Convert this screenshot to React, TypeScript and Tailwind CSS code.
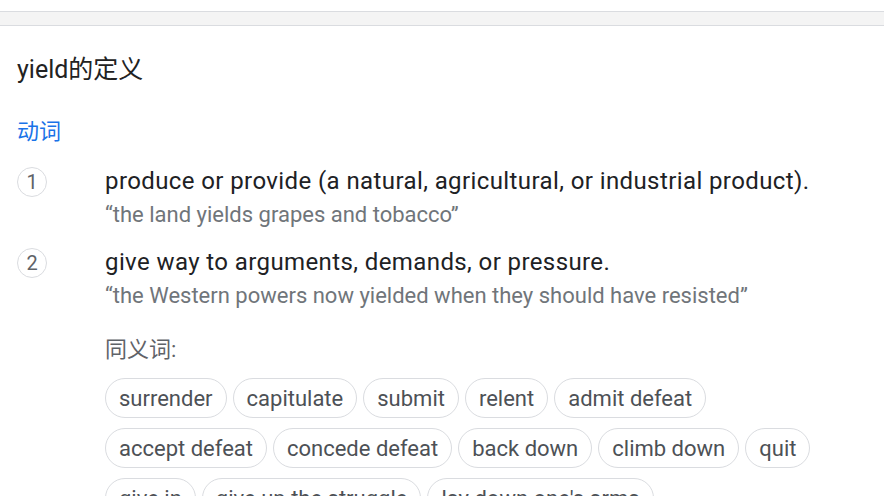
const senses = [
  {
    n: 1,
    def: 'produce or provide (a natural, agricultural, or industrial product).',
    ex: '“the land yields grapes and tobacco”',
  },
  {
    n: 2,
    def: 'give way to arguments, demands, or pressure.',
    ex: '“the Western powers now yielded when they should have resisted”',
  },
]

const synonyms = [
  'surrender',
  'capitulate',
  'submit',
  'relent',
  'admit defeat',
  'accept defeat',
  'concede defeat',
  'back down',
  'climb down',
  'quit',
  'give in',
  'give up the struggle',
  "lay down one's arms",
]

export default function App() {
  return (
    <div
      className="min-h-screen bg-white overflow-hidden"
      style={{ fontFamily: 'Roboto, "Noto Sans CJK SC", Arial, sans-serif' }}
    >
      <div className="mt-[11px] h-[15px] border-y border-[#dadce0] bg-[#f4f4f4]" />

      <div className="pl-[17px]">
        <h1 className="mt-[28px] text-[25px] leading-[32px] text-[#222]">
          yield的定义
        </h1>

        <div className="mt-[32px] text-[22px] leading-[28px] text-[#1a73e8]">动词</div>

        <div className="mt-[21px] flex flex-col gap-[19px]">
          {senses.map(s => (
            <div key={s.n} className="flex">
              <div className="w-[88px] shrink-0">
                <div className="w-[30px] h-[30px] rounded-full border border-[#dadce0] flex items-center justify-center text-[20px] text-[#5f6368]">
                  {s.n}
                </div>
              </div>
              <div>
                <div className="text-[24px] leading-[28px] tracking-[0.4px] text-[#202124]">{s.def}</div>
                <div className="mt-[6px] text-[22px] leading-[28px] text-[#70757a]">{s.ex}</div>
              </div>
            </div>
          ))}
        </div>

        <div className="pl-[88px]">
          <div className="mt-[26px] text-[22px] leading-[28px] text-[#5f6368]">同义词:</div>
          <div className="mt-[14px] w-[745px] flex flex-wrap gap-x-[6px] gap-y-[10px]">
            {synonyms.map(w => (
              <span
                key={w}
                className="h-[40px] px-[13px] rounded-full border border-[#dadce0] flex items-center text-[22px] text-[#4d5156]"
              >
                {w}
              </span>
            ))}
          </div>
        </div>
      </div>
    </div>
  )
}
